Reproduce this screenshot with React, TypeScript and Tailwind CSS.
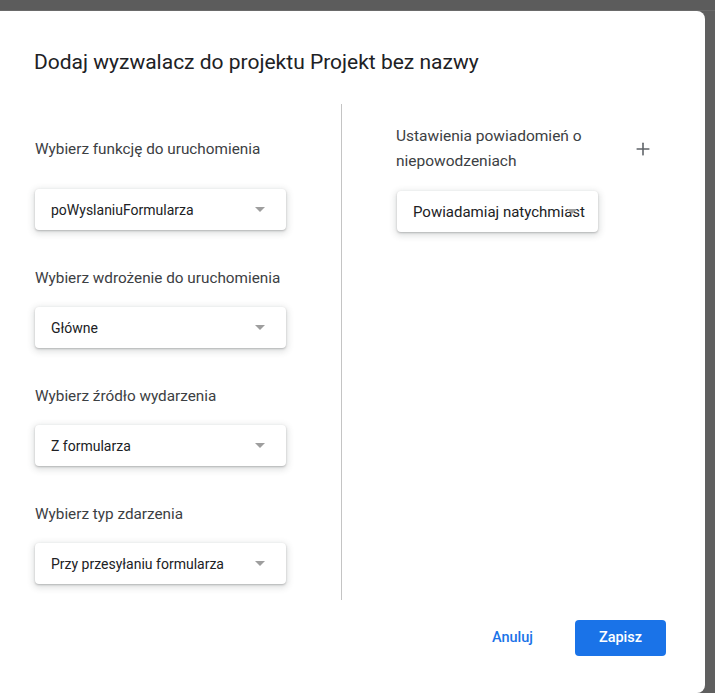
import React from 'react';
import { Plus } from 'lucide-react';

interface SelectProps {
  value: string;
  width: string;
  textSize: string;
}

// Material-style dropdown with a flat card look and a small caret
function Dropdown({ value, width, textSize }: SelectProps) {
  return (
    <div
      className={`relative flex h-[41px] items-center rounded-[4px] bg-white pl-[16px] shadow-[0_1px_2px_rgba(60,64,67,0.3),0_2px_6px_2px_rgba(60,64,67,0.15)] ${width}`}
    >
      <span className={`leading-5 text-[#202124] ${textSize}`}>{value}</span>
      <span className="absolute right-[21px] top-[18px] h-0 w-0 border-x-[5px] border-t-[5px] border-x-transparent border-t-[#9e9e9e]" />
    </div>
  );
}

function Field({ label, value, labelTop, selectTop }: { label: string; value: string; labelTop: string; selectTop: string }) {
  return (
    <div className="flex flex-col">
      <div className={`text-[15.3px] leading-5 text-[#3c4043] ${labelTop}`}>{label}</div>
      <div className={selectTop}>
        <Dropdown value={value} width="w-[251px]" textSize="text-[14px]" />
      </div>
    </div>
  );
}

export default function App() {
  return (
    <div className="flex h-[693px] w-[715px] flex-col overflow-hidden bg-[#5f5f5f] font-['Roboto',sans-serif]">
      {/* strip of the page behind the dialog */}
      <div className="h-[11px] shrink-0 border-b border-[#6a6a6a] bg-[#5c5c5c]" />

      <div className="flex flex-1 pr-[10px]">
        <div className="flex flex-1 flex-col rounded-r-[8px] bg-white pl-[34px] pr-[39px]">
          <h1 className="pt-[37px] text-[21px] leading-7 text-[#202124]">
            Dodaj wyzwalacz do projektu Projekt bez nazwy
          </h1>

          <div className="mt-[28px] flex">
            {/* left column: function, deployment, source, event type */}
            <div className="flex h-[496px] w-[308px] shrink-0 flex-col border-r border-[#c4c4c4] pl-px">
              <Field label="Wybierz funkcję do uruchomienia" value="poWyslaniuFormularza" labelTop="mt-[35px]" selectTop="mt-[30px]" />
              <Field label="Wybierz wdrożenie do uruchomienia" value="Główne" labelTop="mt-[38px]" selectTop="mt-[19px]" />
              <Field label="Wybierz źródło wydarzenia" value="Z formularza" labelTop="mt-[38px]" selectTop="mt-[19px]" />
              <Field label="Wybierz typ zdarzenia" value="Przy przesyłaniu formularza" labelTop="mt-[38px]" selectTop="mt-[19px]" />
            </div>

            {/* right column: failure notifications */}
            <div className="flex flex-1 flex-col pl-[54px]">
              <div className="mt-[20px] flex items-start justify-between">
                <div className="text-[15.5px] leading-[25px] text-[#3c4043]">
                  Ustawienia powiadomień o
                  <br />
                  niepowodzeniach
                </div>
                <Plus className="mr-[13px] mt-[15px] h-[20px] w-[20px] text-[#5f6368]" strokeWidth={1.9} />
              </div>
              <div className="ml-px mt-[17px]">
                <Dropdown value="Powiadamiaj natychmiast" width="w-[201px]" textSize="text-[15px]" />
              </div>
            </div>
          </div>

          <div className="mt-[20px] flex items-center justify-end gap-[26px]">
            <button className="h-[36px] px-[16px] text-[14.5px] font-medium text-[#1a73e8]">Anuluj</button>
            <button className="h-[36px] w-[91px] rounded-[4px] bg-[#1a73e8] text-[14.5px] font-medium text-white">
              Zapisz
            </button>
          </div>
        </div>
      </div>
    </div>
  );
}
